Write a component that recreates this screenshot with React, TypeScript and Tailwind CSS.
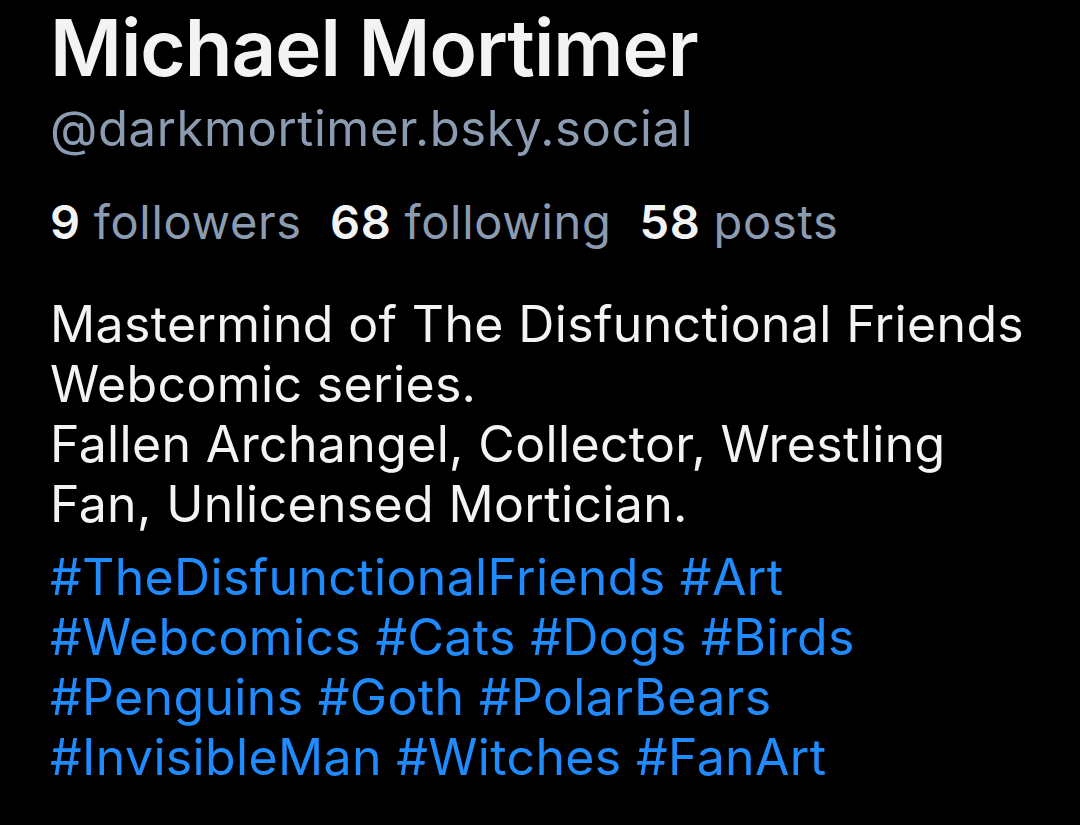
export default function App() {
  const stats: [string, string][] = [
    ["9", "followers"],
    ["68", "following"],
    ["58", "posts"],
  ];
  return (
    <div className="w-[1080px] h-[825px] bg-black overflow-hidden" style={{ fontFamily: "Inter, 'Noto Sans', sans-serif" }}>
      <div className="pl-[50px] pt-[3px]">
        <div className="text-[78px] leading-[90px] font-semibold text-[#f1f3f5] tracking-[-1px]">Michael Mortimer</div>
        <div className="text-[49px] leading-[60px] text-[#8b9cb2] mt-[6px] tracking-[0.6px]">@darkmortimer.bsky.social</div>
        <div className="flex gap-[28px] text-[47px] leading-[56px] text-[#8b9cb2] mt-[35px] tracking-[0.7px]">
          {stats.map(([n, l]) => (
            <div key={l} className="flex gap-[13px]">
              <span className="text-[#f1f3f5] font-semibold">{n}</span>
              <span>{l}</span>
            </div>
          ))}
        </div>
        <div className="text-[50px] leading-[60px] text-[#f1f3f5] mt-[44px] tracking-[0.35px]">
          <p>Mastermind of The Disfunctional Friends<br />Webcomic series.</p>
          <p>Fallen Archangel, Collector, Wrestling<br />Fan, Unlicensed Mortician.</p>
          <p className="text-[#208bfe] mt-[13px]">
            #TheDisfunctionalFriends #Art<br />#Webcomics #Cats #Dogs #Birds<br />#Penguins #Goth #PolarBears<br />#InvisibleMan #Witches #FanArt
          </p>
        </div>
      </div>
    </div>
  );
}
